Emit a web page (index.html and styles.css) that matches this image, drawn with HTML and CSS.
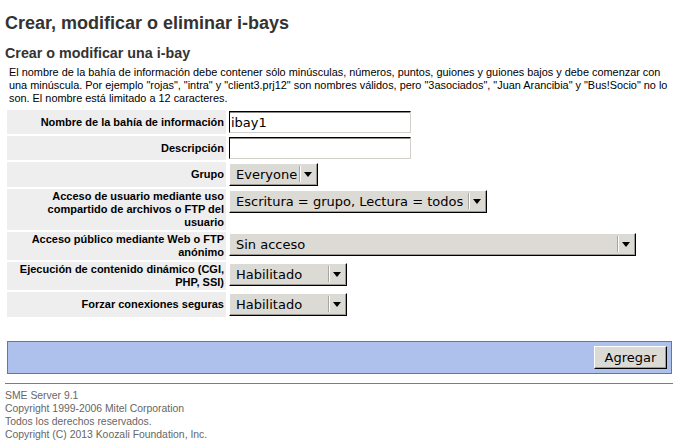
FILE: index.html
```html
<!DOCTYPE html>
<html lang="es">
<head>
<meta charset="utf-8">
<title>Crear, modificar o eliminar i-bays</title>
<link rel="stylesheet" href="styles.css">
</head>
<body>
<div class="page">
  <h1 class="title">Crear, modificar o eliminar i-bays</h1>
  <h2 class="subtitle">Crear o modificar una i-bay</h2>
  <p class="intro">El nombre de la bahía de información debe contener sólo minúsculas, números, puntos, guiones y guiones bajos y debe comenzar con una minúscula. Por ejemplo "rojas", "intra" y "client3.prj12" son nombres válidos, pero "3asociados", "Juan Arancibia" y "Bus!Socio" no lo son. El nombre está limitado a 12 caracteres.</p>

  <table class="form-table">
    <tr>
      <td class="label">Nombre de la bahía de información</td>
      <td class="field"><input class="text-input" type="text" value="ibay1"></td>
    </tr>
    <tr>
      <td class="label">Descripción</td>
      <td class="field"><input class="text-input" type="text" value=""></td>
    </tr>
    <tr>
      <td class="label">Grupo</td>
      <td class="field">
        <div class="select select-grupo"><span class="select-value">Everyone</span><span class="select-arrow"><span class="tri"></span></span></div>
      </td>
    </tr>
    <tr>
      <td class="label">Acceso de usuario mediante uso compartido de archivos o FTP del usuario</td>
      <td class="field">
        <div class="select select-acceso"><span class="select-value">Escritura = grupo, Lectura = todos</span><span class="select-arrow"><span class="tri"></span></span></div>
      </td>
    </tr>
    <tr>
      <td class="label">Acceso público mediante Web o FTP anónimo</td>
      <td class="field">
        <div class="select select-publico"><span class="select-value">Sin acceso</span><span class="select-arrow"><span class="tri"></span></span></div>
      </td>
    </tr>
    <tr>
      <td class="label">Ejecución de contenido dinámico (CGI, PHP, SSI)</td>
      <td class="field">
        <div class="select select-habilitado"><span class="select-value">Habilitado</span><span class="select-arrow"><span class="tri"></span></span></div>
      </td>
    </tr>
    <tr>
      <td class="label">Forzar conexiones seguras</td>
      <td class="field">
        <div class="select select-habilitado"><span class="select-value">Habilitado</span><span class="select-arrow"><span class="tri"></span></span></div>
      </td>
    </tr>
  </table>

  <div class="actions">
    <button class="btn" type="button">Agregar</button>
  </div>

  <div class="rule"></div>

  <div class="footer">
    <div>SME Server 9.1</div>
    <div>Copyright 1999-2006 Mitel Corporation</div>
    <div>Todos los derechos reservados.</div>
    <div>Copyright (C) 2013 Koozali Foundation, Inc.</div>
  </div>
</div>
</body>
</html>
```

FILE: styles.css
```css
html, body {
  margin: 0;
  padding: 0;
  background: #ffffff;
}

body {
  font-family: "Liberation Sans", Arial, sans-serif;
  color: #000000;
}

.page {
  width: 668px;
  padding: 0 5px;
}

.title {
  margin: 13px 0 0;
  font-size: 18px;
  line-height: 20px;
  font-weight: bold;
  color: #333333;
}

.subtitle {
  margin: 12px 0 0;
  font-size: 14.3px;
  line-height: 17px;
  font-weight: bold;
  color: #333333;
}

.intro {
  margin: 4px 0 3px 4px;
  font-size: 10.9px;
  line-height: 13px;
}

.form-table {
  border-collapse: separate;
  border-spacing: 2px;
  margin: 0;
}

.label {
  width: 211px;
  padding: 1px 2px 1px 6px;
  background: #eeeeee;
  text-align: right;
  vertical-align: middle;
  font-weight: bold;
  font-size: 11px;
  line-height: 13px;
}

.field {
  padding: 1px;
  vertical-align: top;
}

.text-input {
  display: block;
  box-sizing: border-box;
  width: 182px;
  height: 22px;
  margin: 0;
  padding: 0 1px;
  border: 1px solid;
  border-color: #000000 #d4d1cb #d4d1cb #000000;
  box-shadow: inset 0 1px 0 #8c8a86;
  background: #ffffff;
  font-family: "DejaVu Sans", sans-serif;
  font-size: 13px;
  color: #000000;
  outline: none;
}

.select {
  display: flex;
  align-items: center;
  box-sizing: border-box;
  height: 23px;
  border: 1px solid;
  border-color: #ffffff #000000 #000000 #ffffff;
  box-shadow: inset -1px -1px 0 #9d9a94;
  background: #dcdad5;
  font-family: "DejaVu Sans", sans-serif;
  font-size: 13px;
  line-height: 16px;
  color: #000000;
}

.select-grupo { width: 89px; }
.select-acceso { width: 258px; }
.select-publico { width: 407px; }
.select-habilitado { width: 118px; }

.select-value {
  flex: 1;
  padding-left: 6px;
  white-space: nowrap;
  overflow: hidden;
}

.select-arrow {
  display: flex;
  align-items: center;
  align-self: stretch;
  margin: 2px 0 3px;
  padding: 0 5px 0 3px;
  border-left: 1px solid #a8a59f;
  box-shadow: inset 1px 0 0 #ffffff;
}

.tri {
  width: 0;
  height: 0;
  margin-left: 1px;
  border-left: 4px solid transparent;
  border-right: 4px solid transparent;
  border-top: 5px solid #000000;
}

.actions {
  display: flex;
  justify-content: flex-end;
  margin: 22px 1px 0 2px;
  padding: 4px;
  border: 1px solid #4f79d0;
  background: #adc1ec;
}

.btn {
  box-sizing: border-box;
  height: 23px;
  width: 73px;
  margin: 0;
  padding: 0;
  border: 1px solid;
  border-color: #ffffff #000000 #000000 #ffffff;
  box-shadow: inset -1px -1px 0 #9d9a94;
  background: #dcdad5;
  font-family: "DejaVu Sans", sans-serif;
  font-size: 13px;
  color: #000000;
}

.rule {
  margin-top: 9px;
  height: 1px;
  background: #5b80d2;
}

.footer {
  margin-top: 5px;
  font-size: 10.4px;
  line-height: 13px;
  color: #666666;
}
```
